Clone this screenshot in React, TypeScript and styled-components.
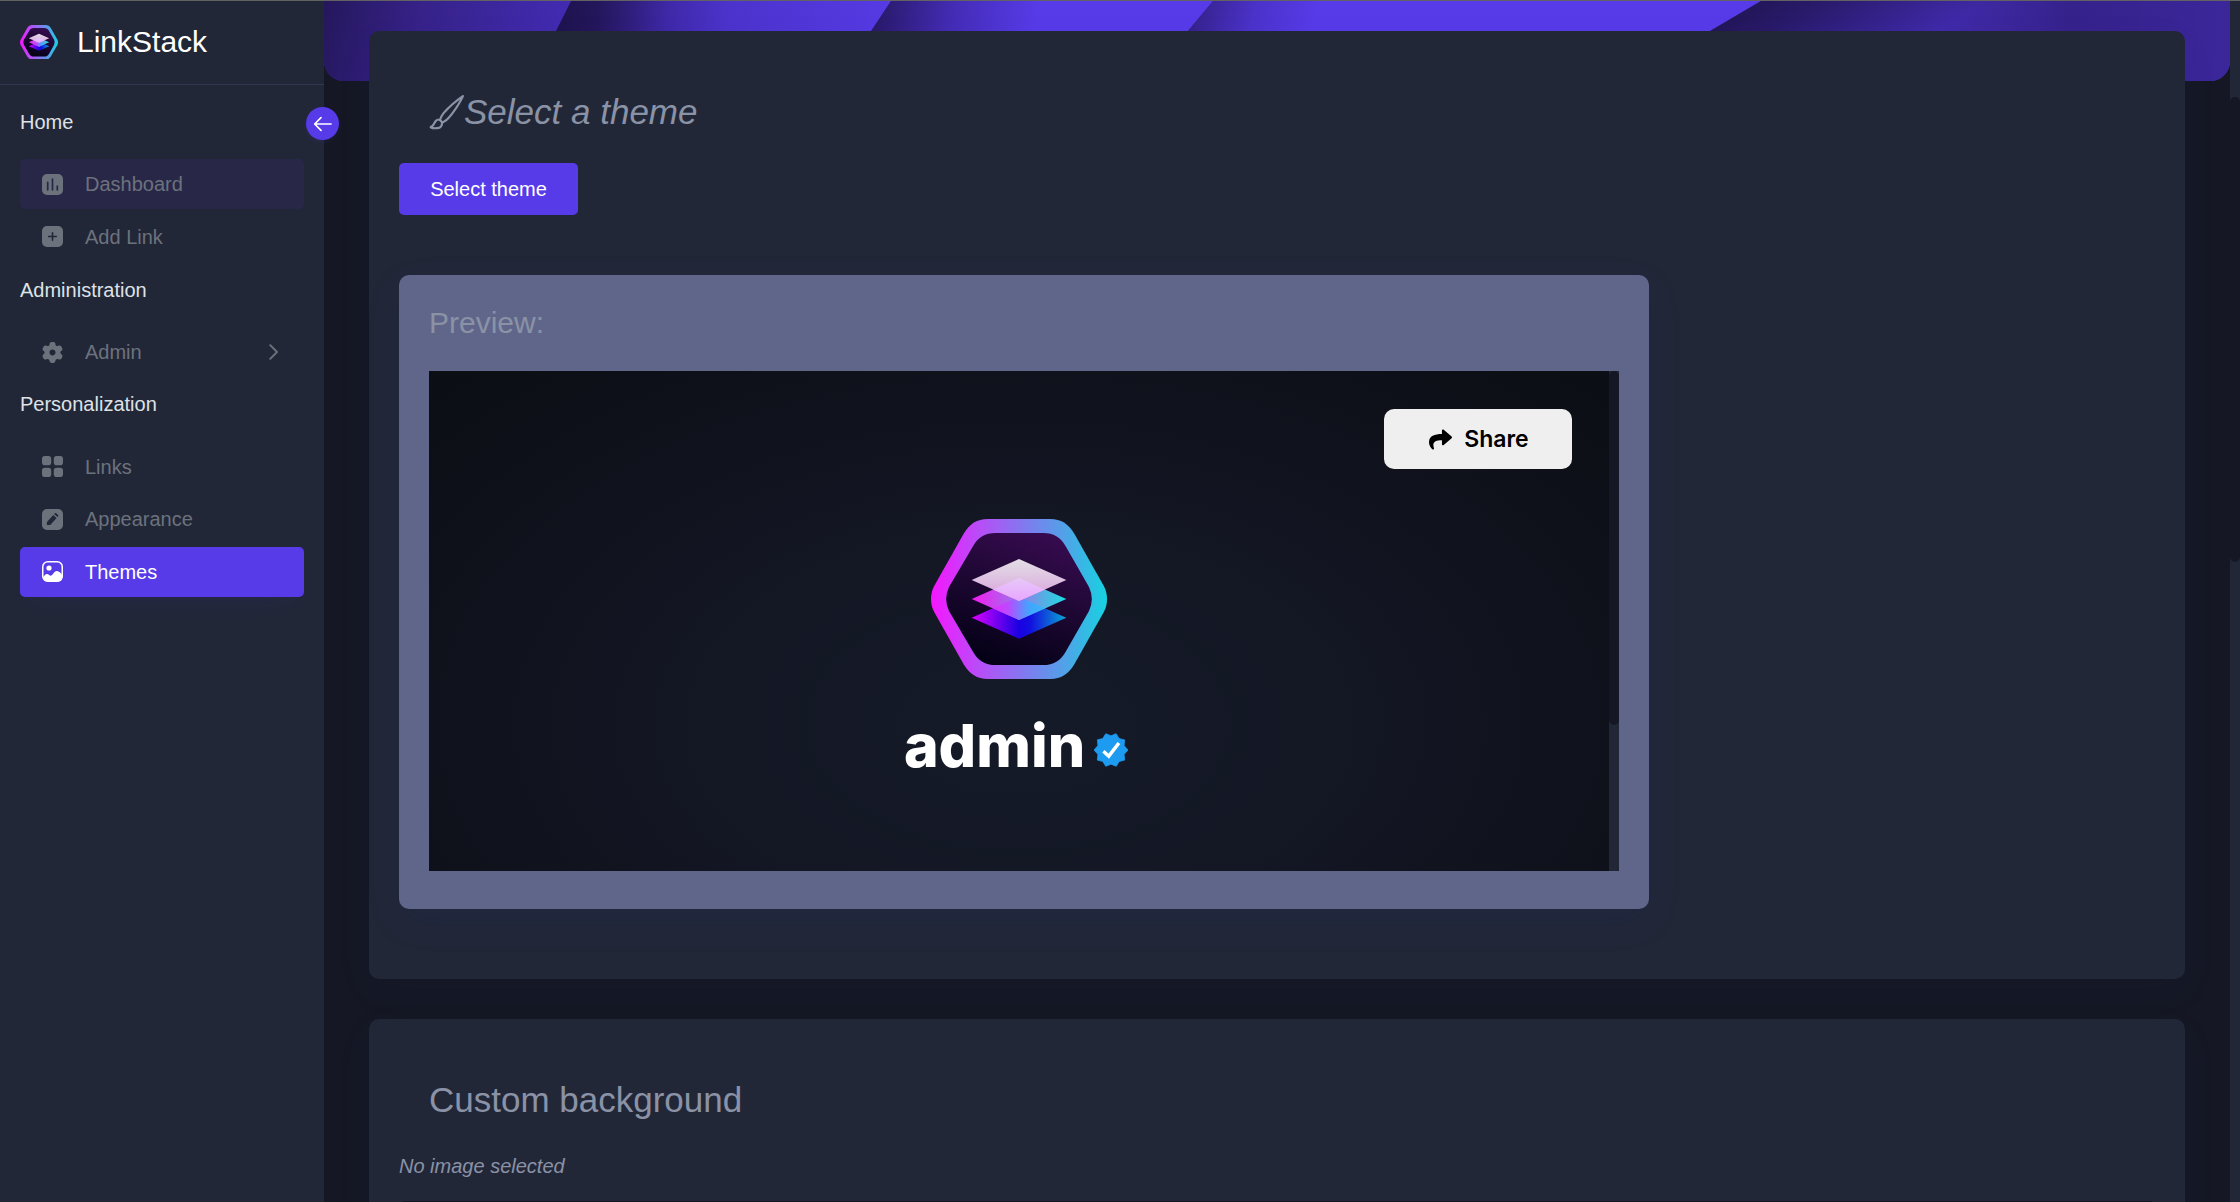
import React from "react";
import styled, { createGlobalStyle, css } from "styled-components";
import { BsBrush } from "react-icons/bs";
import { FaShare } from "react-icons/fa";

const color = {
  body: "#151824",
  surface: "#222738",
  primary: "#573be8",
  heading: "#8a92a6",
  muted: "#6c727c",
  label: "#dee2e6",
};

const GlobalStyle = createGlobalStyle`
  *, *::before, *::after { box-sizing: border-box; }
  html, body, #root { height: 100%; }
  body {
    margin: 0;
    overflow: hidden;
    background: ${color.body};
    color: ${color.heading};
    font: 20px/1.5 "Liberation Sans", Arial, sans-serif;
  }
`;

const Page = styled.div`
  display: flex;
  height: 1202px;
  overflow: hidden;
  border-top: 1px solid #626262;
`;

/* ---------- Sidebar ---------- */

const Sidebar = styled.aside`
  position: relative;
  z-index: 2;
  flex: none;
  width: 324px;
  background: ${color.surface};
`;

const Brand = styled.header`
  display: flex;
  align-items: center;
  gap: 19px;
  height: 84px;
  padding: 0 20px 1px;
  border-bottom: 1px solid #30384f;
`;

const BrandName = styled.span`
  color: #fff;
  font-size: 30px;
  line-height: 36px;
`;

const Toggle = styled.button`
  position: absolute;
  top: 106px;
  right: -15px;
  display: grid;
  place-items: center;
  width: 33px;
  height: 33px;
  padding: 0;
  border: 0;
  border-radius: 50%;
  background: ${color.primary};
  box-shadow: 0 2px 4px rgba(87, 59, 232, 0.12);
`;

const Nav = styled.nav`
  display: flex;
  flex-direction: column;
  padding: 21px 20px 0;
`;

const SectionLabel = styled.div`
  display: flex;
  align-items: center;
  height: 30px;
  margin: 0.8px 0 22.4px;
  color: ${color.label};
`;

const Section = styled.section<{ $height: number }>`
  height: ${(p) => p.$height}px;
`;

const NavItem = styled.a<{ $state?: "hover" | "active" }>`
  display: flex;
  align-items: center;
  gap: 22px;
  height: 50px;
  margin-bottom: 2.5px;
  padding: 0 25px 0 22px;
  border-radius: 5px;
  color: ${color.muted};
  ${(p) => p.$state === "hover" && css`background: #282748;`}
  ${(p) =>
    p.$state === "active" &&
    css`
      color: #fff;
      background: ${color.primary};
      box-shadow: 0 12px 25px -12px rgba(87, 59, 232, 0.1);
    `}
  > svg { flex: none; }
`;

const NavText = styled.span`
  flex: 1;
`;

/* ---------- Content ---------- */

const Content = styled.main`
  flex: 1;
  min-width: 0;
  overflow: hidden;
`;

const Banner = styled.div`
  height: 80px;
  overflow: hidden;
  border-radius: 0 0 20px 20px;
  background: #3a2599;
  > svg { display: block; }
`;

const Cards = styled.div`
  position: relative;
  display: flex;
  flex-direction: column;
  gap: 40px;
  margin-top: -50px;
  padding: 0 45px;
`;

const Card = styled.section<{ $height: number }>`
  height: ${(p) => p.$height}px;
  padding: 60px 30px;
  border-radius: 10px;
  background: ${color.surface};
  box-shadow: 0 12px 38px rgba(17, 38, 146, 0.05);
`;

const CardTitle = styled.h3<{ $italic?: boolean }>`
  display: flex;
  align-items: center;
  height: 42px;
  margin: 0 0 30px;
  padding-left: 30px;
  font-size: 35px;
  font-weight: 400;
  font-style: ${(p) => (p.$italic ? "italic" : "normal")};
`;

const SelectButton = styled.button`
  display: block;
  width: 179px;
  height: 52px;
  padding: 0;
  border: 0;
  border-radius: 5px;
  background: ${color.primary};
  color: #fff;
  font: inherit;
`;

const PreviewCard = styled.div`
  width: 1250px;
  height: 634px;
  margin-top: 60px;
  padding: 30px 30px 0;
  border-radius: 10px;
  background: #60668a;
  box-shadow: 0 12px 38px rgba(17, 38, 146, 0.08);
`;

const PreviewTitle = styled.h4`
  height: 36px;
  margin: 0 0 30px;
  font-size: 30px;
  line-height: 36px;
  font-weight: 400;
`;

const Frame = styled.div`
  display: flex;
  height: 500px;
`;

const Profile = styled.div`
  position: relative;
  flex: 1;
  display: flex;
  flex-direction: column;
  align-items: center;
  padding-top: 148px;
  background: radial-gradient(ellipse farthest-corner at 50% 50%, #151a28 0%, #141825 35%, #0f111b 72%, #0c0e15 100%) 0 0 / 100% 706px no-repeat;
`;

const ShareButton = styled.button`
  position: absolute;
  top: 38px;
  right: 37px;
  display: flex;
  align-items: center;
  justify-content: center;
  gap: 12px;
  width: 188px;
  height: 60px;
  padding: 0 0 0 2px;
  border: 0;
  border-radius: 10px;
  background: #efefef;
  color: #000;
  font: 600 23px/1 Inter, sans-serif;
`;

const UserName = styled.div`
  display: flex;
  align-items: center;
  gap: 7px;
  height: 72px;
  margin: 31px 0 0 -4px;
  color: #fff;
  font: 800 59px/72px Inter, sans-serif;
`;

const BadgeSlot = styled.span`
  display: flex;
  padding-top: 8px;
`;

const EmptyNote = styled.p`
  height: 30px;
  margin: 0;
  font-style: italic;
`;

const FileInput = styled.div`
  height: 48px;
  margin-top: 20px;
  border-radius: 5px;
  background: ${color.body};
`;

const ScrollTrack = styled.div<{ $offset?: number }>`
  flex: none;
  width: 10px;
  padding-top: ${(p) => p.$offset ?? 0}px;
  background: ${color.surface};
`;

const ScrollThumb = styled.div<{ $height: number }>`
  height: ${(p) => p.$height}px;
  border-radius: 5px;
  background: ${color.body};
`;

/* ---------- Drawings ---------- */

function Logo({ width, id }: { width: number; id: string }) {
  const u = (n: string) => `url(#${id}-${n})`;
  return (
    <svg width={width} height={(width * 480) / 528} viewBox="0 0 528 480">
      <defs>
        <linearGradient id={`${id}-ring`}>
          <stop offset="0" stopColor="#f616ff" />
          <stop offset=".25" stopColor="#bd49f8" />
          <stop offset=".5" stopColor="#8874f0" />
          <stop offset=".75" stopColor="#53a0e8" />
          <stop offset="1" stopColor="#16d3e1" />
        </linearGradient>
        <linearGradient id={`${id}-core`} x1=".3" y1="1" x2=".7" y2="0">
          <stop offset="0" stopColor="#030115" />
          <stop offset=".5" stopColor="#1c0731" />
          <stop offset="1" stopColor="#370b50" />
        </linearGradient>
        <linearGradient id={`${id}-low`}>
          <stop offset="0" stopColor="#dc00ff" />
          <stop offset=".5" stopColor="#1a00e2" />
          <stop offset=".62" stopColor="#1210df" />
          <stop offset="1" stopColor="#0aa6d2" />
        </linearGradient>
        <linearGradient id={`${id}-mid`}>
          <stop offset="0" stopColor="#f41bf0" />
          <stop offset=".5" stopColor="#9878ea" />
          <stop offset="1" stopColor="#18dfe0" />
        </linearGradient>
        <linearGradient id={`${id}-mix`}>
          <stop offset="0" stopColor="#e22fff" />
          <stop offset=".3" stopColor="#b94bff" />
          <stop offset=".7" stopColor="#41a5ff" />
          <stop offset="1" stopColor="#38b4fa" />
        </linearGradient>
        <linearGradient id={`${id}-top`} x2="0" y2="1">
          <stop offset="0" stopColor="#e3dfe6" />
          <stop offset="1" stopColor="#d99fdc" />
        </linearGradient>
        <linearGradient id={`${id}-glow`} x2="0" y2="1">
          <stop offset="0" stopColor="#e6c9f8" />
          <stop offset="1" stopColor="#e9a5ff" />
        </linearGradient>
      </defs>
      <path
        fill={u("ring")}
        d="M170 0H358C390 0 412 14 430 44L518 200Q528 218 528 240T518 280L430 436C412 466 390 480 358 480H170C138 480 116 466 98 436L10 280Q0 262 0 240T10 200L98 44C116 14 138 0 170 0Z"
      />
      <path
        fill={u("core")}
        d="M194 42H336C368 42 388 54 404 82L474 204Q491 240 474 276L404 398C388 425 368 438 336 438H194C162 438 142 425 126 398L54 276Q37 240 54 204L126 82C142 54 162 42 194 42Z"
      />
      <path fill={u("low")} d="M122 296 264 233 406 296 264 359Z" />
      <path fill={u("mid")} d="M122 240 264 177 406 240 264 303Z" />
      <path fill={u("mix")} d="M186 268 264 233 342 268 264 303Z" />
      <path fill={u("top")} d="M122 183 264 120 406 183 264 246Z" />
      <path fill={u("glow")} d="M186 211.500 264 177 342 211.500 264 246Z" />
    </svg>
  );
}

function VerifiedBadge() {
  return (
    <svg width="38" height="38" viewBox="0 0 24 24">
      <path
        fill="#1c9bf0"
        stroke="#1c9bf0"
        strokeWidth=".5"
        strokeLinejoin="round"
        d="M22.700 12l-2.440-2.790.340-3.600-3.500-.820-1.890-3.100L12 3.060 8.700 1.700 6.810 4.790 3.400 5.600l.340 3.600L1.300 12l2.440 2.790-.340 3.600 3.410.820L8.700 22.300l3.300-1.370 3.300 1.360 1.890-3.090 3.410-.820-.340-3.590L22.700 12z"
      />
      <path d="M7.200 12.800l3.400 3.100 6.400-8.300" fill="none" stroke="#fff" strokeWidth="2.200" />
    </svg>
  );
}

const iconBox = { width: 21, height: 21, viewBox: "0 0 21 21" };

const DashboardIcon = () => (
  <svg {...iconBox}>
    <rect width="21" height="21" rx="5" fill="currentColor" />
    <path d="M5.700 8.300v7.500M10.500 5.200v10.600M15.300 12.200v3.600" stroke="#282748" strokeWidth="1.700" strokeLinecap="round" />
  </svg>
);

const AddIcon = () => (
  <svg {...iconBox}>
    <rect width="21" height="21" rx="5" fill="currentColor" />
    <path d="M6.700 10.500h7.600M10.500 6.700v7.600" stroke={color.surface} strokeWidth="1.600" strokeLinecap="round" />
  </svg>
);

const GearIcon = () => (
  <svg width="21" height="21" viewBox="2 2 20 20">
    <path
      fill="currentColor"
      fillRule="evenodd"
      d="M20.4023 13.58C20.76 13.77 21.036 14.07 21.2301 14.37C21.6083 14.99 21.5776 15.75 21.2097 16.42L20.4943 17.62C20.1162 18.26 19.411 18.66 18.6855 18.66C18.3278 18.66 17.9292 18.56 17.6022 18.36C17.3365 18.19 17.0299 18.13 16.7029 18.13C15.6911 18.13 14.8429 18.96 14.8122 19.95C14.8122 21.1 13.872 22 12.6968 22H11.3069C10.1215 22 9.18125 21.1 9.18125 19.95C9.16081 18.96 8.31259 18.13 7.30085 18.13C6.96361 18.13 6.65702 18.19 6.40153 18.36C6.0745 18.56 5.66572 18.66 5.31825 18.66C4.58245 18.66 3.87729 18.26 3.49917 17.62L2.79402 16.42C2.4159 15.77 2.39546 14.99 2.77358 14.37C2.93709 14.07 3.24368 13.77 3.59115 13.58C3.87729 13.44 4.06125 13.21 4.23498 12.94C4.74596 12.08 4.43937 10.95 3.57071 10.44C2.55897 9.87 2.23194 8.6 2.81446 7.61L3.49917 6.43C4.09191 5.44 5.35913 5.09 6.38109 5.67C7.27019 6.15 8.425 5.83 8.9462 4.98C9.10972 4.7 9.20169 4.4 9.18125 4.1C9.16081 3.71 9.27323 3.34 9.4674 3.04C9.84553 2.42 10.5302 2.02 11.2763 2H12.7172C13.4735 2 14.1582 2.42 14.5363 3.04C14.7203 3.34 14.8429 3.71 14.8122 4.1C14.7918 4.4 14.8838 4.7 15.0473 4.98C15.5685 5.83 16.7233 6.15 17.6226 5.67C18.6344 5.09 19.9118 5.44 20.4943 6.43L21.179 7.61C21.7718 8.6 21.4447 9.87 20.4228 10.44C19.5541 10.95 19.2475 12.08 19.7687 12.94C19.9322 13.21 20.1162 13.44 20.4023 13.58ZM9.10972 12.01C9.10972 13.58 10.4076 14.83 12.0121 14.83C13.6165 14.83 14.8838 13.58 14.8838 12.01C14.8838 10.44 13.6165 9.18 12.0121 9.18C10.4076 9.18 9.10972 10.44 9.10972 12.01Z"
    />
  </svg>
);

const LinksIcon = () => (
  <svg {...iconBox} fill="currentColor">
    <rect width="9.200" height="9.200" rx="2.800" />
    <rect x="11.800" width="9.200" height="9.200" rx="2.800" />
    <rect y="11.800" width="9.200" height="9.200" rx="2.800" />
    <rect x="11.800" y="11.800" width="9.200" height="9.200" rx="2.800" />
  </svg>
);

const EditIcon = () => (
  <svg {...iconBox}>
    <rect width="21" height="21" rx="5" fill="currentColor" />
    <g fill={color.surface}>
      <path d="M5 13.100 11.200 5.900 14.600 8.900 8.500 15.800Q8.200 16.100 7.800 16.100H5.300Q4.900 16.100 4.900 15.700V13.500Q4.900 13.300 5 13.100Z" />
      <path d="M12.100 4.900 12.900 4.200Q13.500 3.700 14.200 4.200L16.100 5.900Q16.700 6.500 16.200 7.100L15.500 7.900Z" />
    </g>
  </svg>
);

const ImageIcon = () => (
  <svg {...iconBox}>
    <rect x=".750" y=".750" width="19.500" height="19.500" rx="5" fill="none" stroke="currentColor" strokeWidth="1.500" />
    <circle cx="7" cy="7" r="2.600" fill="currentColor" />
    <path
      fill="currentColor"
      d="M1 16.200C2.300 14.900 3.300 12.900 5 13C6.700 13.100 7.600 14.800 9 14.700C10.700 14.500 12 10.400 14.600 10.100C17.200 9.900 18.600 12.300 20.300 14V16C20.300 19 18.800 20.500 16 20.500H5.500C2.500 20.500 1 19 1 16.200Z"
    />
  </svg>
);

const ChevronIcon = () => (
  <svg width="10" height="16" viewBox="0 0 10 16">
    <path d="M1.200 1.200 8 8 1.200 14.800" fill="none" stroke="currentColor" strokeWidth="1.900" strokeLinecap="round" strokeLinejoin="round" />
  </svg>
);

const BackArrowIcon = () => (
  <svg width="20" height="16" viewBox="0 0 20 16">
    <path d="M18 8H1.700M8 1.700 1.700 8 8 14.300" fill="none" stroke="#fff" strokeWidth="1.700" strokeLinecap="round" strokeLinejoin="round" />
  </svg>
);

function BannerArt() {
  return (
    <svg width="1906" height="80" viewBox="0 0 1906 80">
      <defs>
        <linearGradient id="fold-a" gradientUnits="userSpaceOnUse" x1="0" y1="0" x2="235" y2="50">
          <stop offset="0" stopColor="#25175c" />
          <stop offset=".4" stopColor="#362288" />
          <stop offset="1" stopColor="#432bb2" />
        </linearGradient>
        <linearGradient id="fold-b" gradientUnits="userSpaceOnUse" x1="240" y1="0" x2="567" y2="30">
          <stop offset="0" stopColor="#1f1451" />
          <stop offset=".1" stopColor="#23165a" />
          <stop offset=".2" stopColor="#2f1e7a" />
          <stop offset=".32" stopColor="#3f29a8" />
          <stop offset=".5" stopColor="#4c33cc" />
          <stop offset="1" stopColor="#563ae4" />
        </linearGradient>
        <linearGradient id="fold-c" gradientUnits="userSpaceOnUse" x1="556" y1="0" x2="710" y2="30">
          <stop offset="0" stopColor="#2a1a6b" />
          <stop offset=".5" stopColor="#452db9" />
          <stop offset="1" stopColor="#573be8" />
        </linearGradient>
        <linearGradient id="fold-d" gradientUnits="userSpaceOnUse" x1="872" y1="0" x2="985" y2="35">
          <stop offset="0" stopColor="#35228a" />
          <stop offset=".5" stopColor="#4b32c9" />
          <stop offset="1" stopColor="#573be8" />
        </linearGradient>
        <linearGradient id="fold-e" gradientUnits="userSpaceOnUse" x1="1437" y1="0" x2="1495" y2="99">
          <stop offset="0" stopColor="#24165a" />
          <stop offset=".25" stopColor="#281a68" />
          <stop offset="1" stopColor="#402aa9" />
        </linearGradient>
        <linearGradient id="fold-f" gradientUnits="userSpaceOnUse" x1="1620" y1="0" x2="1906" y2="0">
          <stop offset="0" stopColor="#38248f" stopOpacity="0" />
          <stop offset=".45" stopColor="#35228b" />
          <stop offset="1" stopColor="#3b279a" />
        </linearGradient>
      </defs>
      <path fill="url(#fold-b)" d="M247 0H567L514 80H190Z" />
      <path fill="url(#fold-a)" d="M0 0H247L232 30L205 80H0Z" />
      <path fill="url(#fold-c)" d="M567 0H889L822 80H514Z" />
      <path fill="url(#fold-d)" d="M889 0H1437L1301 80H822Z" />
      <path fill="url(#fold-e)" d="M1437 0H1906V80H1301Z" />
      <path fill="url(#fold-f)" d="M1620 0H1906V80H1620Z" />
    </svg>
  );
}

/* ---------- Page ---------- */

export default function App() {
  return (
    <>
      <GlobalStyle />
      <Page>
        <Sidebar>
          <Brand>
            <Logo width={38} id="brand" />
            <BrandName>LinkStack</BrandName>
          </Brand>
          <Toggle aria-label="Collapse sidebar">
            <BackArrowIcon />
          </Toggle>
          <Nav>
            <Section $height={168}>
              <SectionLabel>Home</SectionLabel>
              <NavItem $state="hover">
                <DashboardIcon />
                <NavText>Dashboard</NavText>
              </NavItem>
              <NavItem>
                <AddIcon />
                <NavText>Add Link</NavText>
              </NavItem>
            </Section>
            <Section $height={114.4}>
              <SectionLabel>Administration</SectionLabel>
              <NavItem>
                <GearIcon />
                <NavText>Admin</NavText>
                <ChevronIcon />
              </NavItem>
            </Section>
            <Section $height={220}>
              <SectionLabel>Personalization</SectionLabel>
              <NavItem>
                <LinksIcon />
                <NavText>Links</NavText>
              </NavItem>
              <NavItem>
                <EditIcon />
                <NavText>Appearance</NavText>
              </NavItem>
              <NavItem $state="active">
                <ImageIcon />
                <NavText>Themes</NavText>
              </NavItem>
            </Section>
          </Nav>
        </Sidebar>

        <Content>
          <Banner>
            <BannerArt />
          </Banner>
          <Cards>
            <Card $height={948}>
              <CardTitle $italic>
                <BsBrush size={35} />
                Select a theme
              </CardTitle>
              <SelectButton>Select theme</SelectButton>
              <PreviewCard>
                <PreviewTitle>Preview:</PreviewTitle>
                <Frame>
                  <Profile>
                    <ShareButton>
                      <FaShare size={23} />
                      Share
                    </ShareButton>
                    <Logo width={176} id="avatar" />
                    <UserName>
                      admin
                      <BadgeSlot>
                        <VerifiedBadge />
                      </BadgeSlot>
                    </UserName>
                  </Profile>
                  <ScrollTrack>
                    <ScrollThumb $height={354} />
                  </ScrollTrack>
                </Frame>
              </PreviewCard>
            </Card>
            <Card $height={400}>
              <CardTitle>Custom background</CardTitle>
              <EmptyNote>No image selected</EmptyNote>
              <FileInput />
            </Card>
          </Cards>
        </Content>

        <ScrollTrack $offset={96}>
          <ScrollThumb $height={465} />
        </ScrollTrack>
      </Page>
    </>
  );
}
